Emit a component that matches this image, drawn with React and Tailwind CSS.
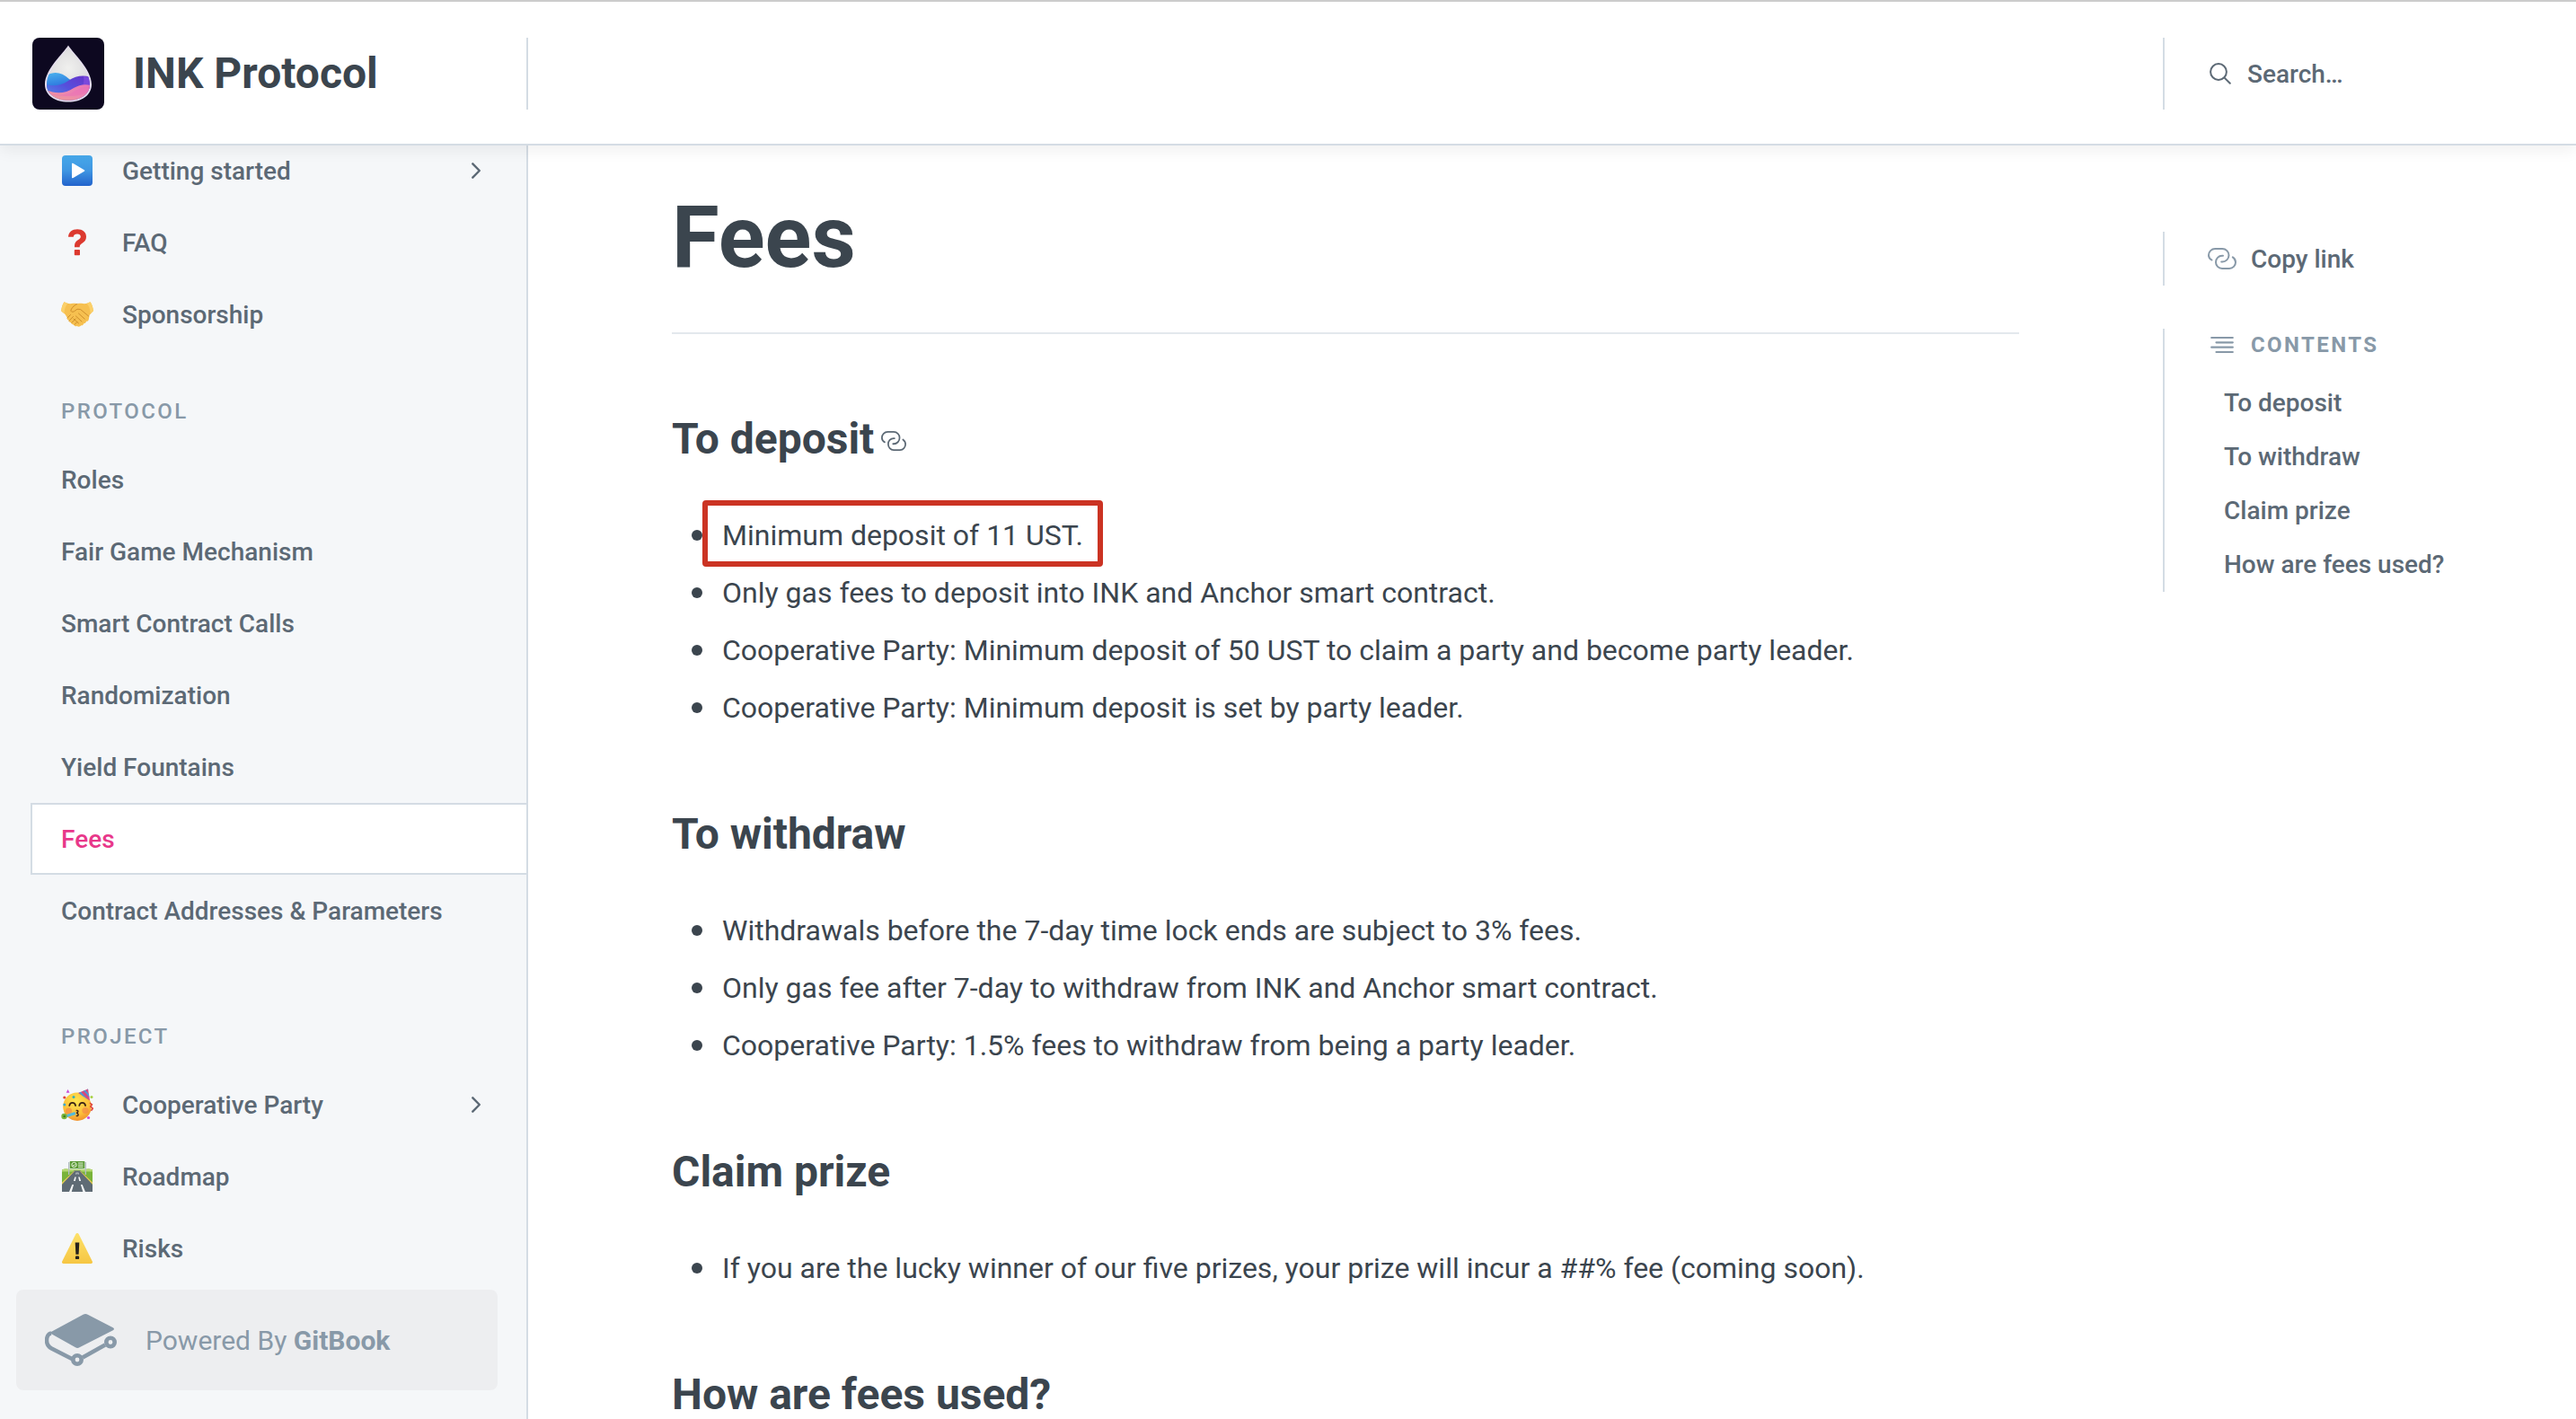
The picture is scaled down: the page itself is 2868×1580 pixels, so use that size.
const sidebarTop = [
  { label: "Getting started", Icon: PlayEmoji, expandable: true },
  { label: "FAQ", Icon: QuestionEmoji },
  { label: "Sponsorship", Icon: HandshakeEmoji },
];

const protocolPages = [
  { label: "Roles" },
  { label: "Fair Game Mechanism" },
  { label: "Smart Contract Calls" },
  { label: "Randomization" },
  { label: "Yield Fountains" },
  { label: "Fees", active: true },
  { label: "Contract Addresses & Parameters" },
];

const projectPages = [
  { label: "Cooperative Party", Icon: PartyEmoji, expandable: true },
  { label: "Roadmap", Icon: RoadEmoji },
  { label: "Risks", Icon: WarningEmoji },
];

const sections = [
  {
    id: "to-deposit",
    title: "To deposit",
    linked: true,
    items: [
      { text: "Minimum deposit of 11 UST.", highlighted: true },
      { text: "Only gas fees to deposit into INK and Anchor smart contract." },
      { text: "Cooperative Party: Minimum deposit of 50 UST to claim a party and become party leader." },
      { text: "Cooperative Party: Minimum deposit is set by party leader." },
    ],
  },
  {
    id: "to-withdraw",
    title: "To withdraw",
    items: [
      { text: "Withdrawals before the 7-day time lock ends are subject to 3% fees." },
      { text: "Only gas fee after 7-day to withdraw from INK and Anchor smart contract." },
      { text: "Cooperative Party: 1.5% fees to withdraw from being a party leader." },
    ],
  },
  {
    id: "claim-prize",
    title: "Claim prize",
    items: [
      { text: "If you are the lucky winner of our five prizes, your prize will incur a ##% fee (coming soon)." },
    ],
  },
  { id: "how-are-fees-used", title: "How are fees used?", items: [] },
];

function PlayEmoji() {
  return (
    <svg viewBox="0 0 36 36" className="size-9 shrink-0" aria-hidden="true">
      <defs>
        <linearGradient id="play" x1="0" y1="0" x2="0" y2="1">
          <stop offset="0" stopColor="#47a9ea" />
          <stop offset="0.5" stopColor="#3f96e2" />
          <stop offset="1" stopColor="#2263cc" />
        </linearGradient>
      </defs>
      <rect x="1" y="1" width="34" height="34" rx="4" fill="url(#play)" />
      <path d="M12 10.500v15a.8.8 0 0 0 1.200.7l12.600-7.400a.9.9 0 0 0 0-1.600L13.200 9.800a.8.8 0 0 0-1.200.7z" fill="#fff" />
    </svg>
  );
}

function QuestionEmoji() {
  return (
    <svg viewBox="0 0 36 36" className="size-9 shrink-0" aria-hidden="true">
      <path
        d="M8 11.700C8.300 6.500 12.300 3.200 18.100 3.200c5.800 0 9.900 3.200 9.900 8.200 0 3.600-1.800 5.700-4.700 7.500-2.200 1.400-2.600 2.200-2.600 4.300h-5.700v-1.500c0-3.300 1.500-5.100 4.100-6.700 2-1.200 2.700-2.100 2.700-3.500 0-1.800-1.500-3-3.800-3s-4 1.200-4.200 3.200z"
        fill="#dc3a30"
      />
      <rect x="14.800" y="26" width="6.200" height="6.200" rx="0.800" fill="#dc3a30" />
    </svg>
  );
}

function HandshakeEmoji() {
  return (
    <svg viewBox="0 0 36 36" className="size-9 shrink-0" aria-hidden="true">
      <path
        d="M3.500 4.200c2.500 1.500 5 2.100 8 1.900 2.500-.2 4.300-.6 6.500.3 2.300-.9 4.200-.5 6.500-.3 3 .2 5.500-.4 8-1.900 1.800 2.400 3.200 6.500 3.400 10-1.300 1.600-3 3-4.200 4.500l-1 5.200c-.5 1.500-1.500 2-2.700 1.900-.2 1.600-1.200 2.600-2.800 2.500-.3 1.500-1.500 2.400-3 2-1 1.700-3 1.800-4.600.7-1.500.6-3-.1-3.400-1.600-1.500.2-2.700-.6-2.900-2.100-1.600.1-2.600-1-2.600-2.500-1.500-.3-2.300-1.600-1.900-3L4.500 18C3.300 16.700 1.200 15.700.2 14.200c.2-3.500 1.500-7.600 3.300-10z"
        fill="#f6c050"
      />
      <path d="M3.500 4.200C1.700 6.600.4 10.700.2 14.200l3.300 2.600C3.700 12 5 8.500 7.500 5.800zM32.500 4.200c1.800 2.400 3.200 6.500 3.400 10l-3.300 2.600c-.2-4.800-1.500-8.300-4-11z" fill="#fbd06a" />
      <g fill="none" stroke="#cf8f2c" strokeWidth="1" strokeLinecap="round" strokeLinejoin="round">
        <path d="M18 6.400c-3 1.200-5.500 3.600-7 6.600-.7 2 1.600 2.900 3.400 1.800l3.600-2.600 3.600.3 9 7.500" />
        <path d="M19.500 17l6.800 6.200M16.500 20l6.500 6M14 23l5.500 5" />
        <path d="M7 22l3.500-3.500M9 25.200l4.500-4.700M11.800 27.400l4.500-4.500M15 29.500l3-3.200" />
      </g>
    </svg>
  );
}

function PartyEmoji() {
  return (
    <svg viewBox="0 0 36 36" className="size-9 shrink-0" aria-hidden="true">
      <defs>
        <radialGradient id="face" cx="0.450" cy="0.300" r="0.800">
          <stop offset="0" stopColor="#fee550" />
          <stop offset="0.600" stopColor="#fbbf3a" />
          <stop offset="1" stopColor="#ee7f2a" />
        </radialGradient>
        <clipPath id="hat">
          <path d="M30 0.500l2 13-13-8.500z" />
        </clipPath>
      </defs>
      <circle cx="18" cy="20.200" r="15.800" fill="url(#face)" />
      <circle cx="8.500" cy="25" r="3.600" fill="#f2824a" opacity="0.600" />
      <circle cx="27" cy="24.500" r="3.600" fill="#f2824a" opacity="0.600" />
      <path d="M9.300 19c.6-4.300 6-4.300 6.800 0M20.300 19c.6-4.300 6-4.300 6.800 0" fill="none" stroke="#3b2416" strokeWidth="1.800" strokeLinecap="round" />
      <path d="M17.300 24.500c2-.6 2.400 2.400-.4 2.800 2.800.2 3 3.600.4 3.300" fill="none" stroke="#4a2a18" strokeWidth="1.500" strokeLinecap="round" />
      <path d="M15.300 26l1 3L5 32.500l-1-2.800z" fill="#53b9dc" />
      <circle cx="3.500" cy="31" r="3.200" fill="#7db53c" />
      <circle cx="3.700" cy="31" r="1.300" fill="#3f7a24" />
      <path d="M30 0.500l2 13-13-8.500z" fill="#d8477e" />
      <g clipPath="url(#hat)" stroke="#4d9bd6" strokeWidth="2">
        <path d="M19 2l14 15M23-1l12 13M27-3l9 10" />
      </g>
      <path d="M32 16l2.400 2-1.600 2.200 2.600 2-2 2.600" fill="none" stroke="#e0453c" strokeWidth="1.600" />
      <path d="M7.500 1l2 3.800H5.700z" fill="#c94bd6" />
      <circle cx="3.800" cy="10" r="1.600" fill="#e0453c" />
      <circle cx="3.800" cy="18" r="1.500" fill="#35a8d8" />
      <circle cx="14" cy="9.500" r="1.500" fill="#35b0b8" />
      <circle cx="34" cy="9.500" r="1.500" fill="#a8d244" />
      <circle cx="30.500" cy="32.500" r="1.600" fill="#d04bd8" />
    </svg>
  );
}

function RoadEmoji() {
  return (
    <svg viewBox="0 0 36 36" className="size-9 shrink-0" aria-hidden="true">
      <path d="M1 10.500c3-1.800 6-1 9-.5h16c3-.8 6-1 9 .5V35H1z" fill="#79b33a" />
      <path d="M1 10.500c3-1.800 6-1 9-.5h16c3-.8 6-1 9 .5v2H1z" fill="#b5d873" />
      <path d="M14.500 11.500h7L35 27v8H1v-8z" fill="#5f6b75" />
      <path d="M14.300 12L1 24.500v2.200L15 12zM21.700 12L35 24.500v2.200L21 12z" fill="#e7c75a" />
      <path d="M12.300 27l1.800 0-2.400 8H9zM23.700 27l-1.800 0 2.400 8H27zM15.300 18.500h1.500l-1 4.500h-1.900zM20.700 18.500h-1.500l1 4.500h1.900zM16.800 13.500h.8l-.3 2h-1zM19.200 13.500h-.8l.3 2h1z" fill="#f4f6f7" />
      <path d="M8 2h1.300v14H8zM26.700 2H28v14h-1.300z" fill="#b4bec6" />
      <rect x="9.800" y="1" width="16.500" height="8.200" fill="#5a9a34" />
      <circle cx="14.500" cy="5" r="2.700" fill="none" stroke="#e9f3e0" strokeWidth="1" />
      <path d="M13 5l1.200 1.200 1.800-2M19 3h5.500M19 5.200h5.500M19 7.300h5.500" fill="none" stroke="#e9f3e0" strokeWidth="1" />
    </svg>
  );
}

function WarningEmoji() {
  return (
    <svg viewBox="0 0 36 36" className="size-9 shrink-0" aria-hidden="true">
      <defs>
        <linearGradient id="warning" x1="0" y1="0" x2="0" y2="1">
          <stop offset="0" stopColor="#fde16a" />
          <stop offset="1" stopColor="#f6c643" />
        </linearGradient>
      </defs>
      <path d="M16.400 2.100a1.800 1.800 0 0 1 3.200 0L34.800 32.500A1.700 1.700 0 0 1 33.300 35H2.700a1.700 1.700 0 0 1-1.500-2.500z" fill="url(#warning)" />
      <path d="M15.700 11.500h4.600l-.7 13.200h-3.200z" fill="#27221c" />
      <rect x="15.900" y="26.500" width="4.200" height="3.600" rx="1.200" fill="#27221c" />
    </svg>
  );
}

function LogoMark() {
  return (
    <svg viewBox="0 0 80 80" className="size-20 shrink-0 rounded-lg" aria-hidden="true">
      <defs>
        <clipPath id="drop">
          <path d="M40 12.500C36 19 16 37 16 54 16 65.500 27 71.800 40 71.800S64 65.500 64 54C64 37 44 19 40 12.500z" />
        </clipPath>
        <linearGradient id="blue" x1="0" y1="0" x2="0.300" y2="1">
          <stop offset="0" stopColor="#4db5ee" />
          <stop offset="1" stopColor="#1f5fd8" />
        </linearGradient>
        <linearGradient id="violet" x1="1" y1="0" x2="0" y2="1">
          <stop offset="0" stopColor="#6b2fc9" />
          <stop offset="0.450" stopColor="#5550dc" />
          <stop offset="1" stopColor="#4ba3f2" />
        </linearGradient>
        <linearGradient id="pink" x1="1" y1="0" x2="0.400" y2="1">
          <stop offset="0" stopColor="#e874b8" />
          <stop offset="0.500" stopColor="#ec86b0" />
          <stop offset="1" stopColor="#eda090" />
        </linearGradient>
        <radialGradient id="glass" cx="0.500" cy="0.450" r="0.500">
          <stop offset="0" stopColor="#f0f0ee" />
          <stop offset="1" stopColor="#cfcdd2" />
        </radialGradient>
      </defs>
      <rect width="80" height="80" fill="#0d0820" />
      <path d="M40 8.500C35 17 14 35 14 52 14 64 25 71.500 40 71.500S66 64 66 52C66 35 45 17 40 8.500z" fill="#e6def0" />
      <g transform="translate(0 -2)">
        <g clipPath="url(#drop)">
          <rect width="80" height="80" fill="url(#glass)" />
          <path d="M15 44c9-5 18-4 26 4l10 6-20 10H12z" fill="url(#blue)" />
          <path d="M12 53c8 3 18 4 28-3 9-6 18-7 28-3v30H12z" fill="url(#violet)" />
          <path d="M57 45l10 1v14H53c4-4 5-10 4-15z" fill="#7a49dc" />
          <path d="M12 58c11 7 24 7 34 0 7-4 14-5 22-2v22H12z" fill="url(#pink)" />
          <path d="M14 62c11 5 22 5 32 0s14-6 22-6c-6 9-16 11-28 11-11 0-19-1-26-5z" fill="#ea68b8" opacity="0.400" />
        </g>
      </g>
    </svg>
  );
}

function GitBookMark() {
  return (
    <svg viewBox="0 0 80 58" className="h-[58px] w-20 shrink-0" fill="none" aria-hidden="true">
      <path d="M42.500.8c1.800-1 3.500-1 5.200 0L75.800 15.200c1.600.9 1.600 2.100 0 3L38.500 37.300c-1.500.8-3 .8-4.500 0L5 21z" fill="#8899a8" />
      <path d="M7 21.500C3.500 22 2 26 2 29.500c0 4 2 7 5.500 9L31 50.500M42 48.500L67 34.500" stroke="#8899a8" strokeWidth="4.500" />
      <circle cx="36" cy="51" r="4.700" stroke="#8899a8" strokeWidth="4.600" />
      <circle cx="73" cy="31.500" r="4.700" stroke="#8899a8" strokeWidth="4.600" />
    </svg>
  );
}

function LinkIcon({ className }) {
  return (
    <svg viewBox="0 0 32 24" preserveAspectRatio="none" className={className} fill="none" stroke="currentColor" strokeWidth="2" strokeLinecap="round" aria-hidden="true">
      <path d="M4.500 13.500C2.500 12.300 1 10.500 1 8.200 1 4.200 4.200 1 8.200 1h8C20.200 1 23.500 4.200 23.500 8.200s-3.300 7.300-7.300 7.300h-1" />
      <path d="M17 8.800h-1c-4 0-7 3.200-7 7.100S12 23 16 23h8c4 0 7-3.200 7-7.100 0-2.400-1.200-4.300-3.200-5.600" />
    </svg>
  );
}

function Chevron() {
  return (
    <svg viewBox="0 0 10 18" className="h-[18px] w-2.5 shrink-0" fill="none" stroke="currentColor" strokeWidth="2.400" strokeLinecap="round" strokeLinejoin="round" aria-hidden="true">
      <path d="M1.300 1.300L8.800 9l-7.500 7.700" />
    </svg>
  );
}

function SearchIcon() {
  return (
    <svg viewBox="0 0 24 24" className="size-6 shrink-0" fill="none" stroke="currentColor" strokeWidth="2" strokeLinecap="round" aria-hidden="true">
      <circle cx="10" cy="10" r="8.900" />
      <path d="M16.600 16.600L22.800 22.800" />
    </svg>
  );
}

function ContentsIcon() {
  return (
    <svg viewBox="0 0 26 20" className="h-5 w-[26px] shrink-0" fill="none" stroke="currentColor" strokeWidth="2.200" strokeLinecap="round" aria-hidden="true">
      <path d="M1.200 2h23.600M6.500 7.300h18.300M1.200 12.700h23.600M6.500 18h18.300" />
    </svg>
  );
}

function NavItem({ item }) {
  const { label, Icon, expandable, active } = item;
  return (
    <li>
      <a
        href="#"
        aria-current={active ? "page" : undefined}
        className={
          active
            ? "flex h-20 items-center border-2 border-r-0 border-[#d4dce4] bg-white pl-8 text-[#e8388a]"
            : "flex h-20 items-center gap-8 pr-[51px] pl-[34px]"
        }
      >
        {Icon && <Icon />}
        <span className="flex-1 pt-0.5">{label}</span>
        {expandable && <Chevron />}
      </a>
    </li>
  );
}

function NavGroup({ title, items }) {
  return (
    <section>
      {title && (
        <h2 className="pl-[34px] text-[24px] leading-8 font-medium tracking-[2.400px] text-[#8899a8] uppercase">{title}</h2>
      )}
      <ul className={title ? "pt-5" : ""}>
        {items.map((item) => (
          <NavItem key={item.label} item={item} />
        ))}
      </ul>
    </section>
  );
}

export default function App() {
  return (
    <div className="flex h-screen flex-col overflow-hidden bg-white font-[Roboto,sans-serif] text-[#3b454e]">
      <header className="relative z-10 flex shrink-0 items-center border-t-2 border-b-2 border-t-[#cccccc] border-b-[#d4dce4] bg-white pt-10 pb-[38px] shadow-[0_6px_16px_rgba(0,0,0,0.06)]">
        <a href="#" className="flex w-[588px] shrink-0 items-center gap-8 border-r-2 border-[#d4dce4] pl-9">
          <LogoMark />
          <span className="text-5xl font-bold">INK Protocol</span>
        </a>
        <div className="flex-1" />
        <label className="flex h-20 w-[460px] shrink-0 items-center gap-[18px] border-l-2 border-[#d4dce4] pl-[50px] text-[#5c6975]">
          <SearchIcon />
          <input
            type="search"
            aria-label="Search"
            placeholder="Search…"
            className="w-full min-w-0 bg-transparent pt-0.5 text-[28px] font-medium outline-none placeholder:text-[#5c6975] placeholder:opacity-100"
          />
        </label>
      </header>

      <div className="flex min-h-0 flex-1">
        <aside className="flex w-[588px] shrink-0 flex-col border-r-2 border-[#d4dce4] bg-[#f5f7f9]">
          <nav className="-mt-3 flex-1 pl-[34px] text-[28px] font-medium text-[#5c6975]">
            <NavGroup items={sidebarTop} />
            <div className="pt-13">
              <NavGroup title="Protocol" items={protocolPages} />
            </div>
            <div className="pt-[84px]">
              <NavGroup title="Project" items={projectPages} />
            </div>
          </nav>
          <a href="#" className="mr-8 mb-8 ml-[18px] flex h-28 items-center gap-8 rounded-lg bg-[#edeef0] pl-8 text-[30px] text-[#8899a8]">
            <GitBookMark />
            <span>
              Powered By <b className="font-bold">GitBook</b>
            </span>
          </a>
        </aside>

        <main className="min-w-0 flex-1 overflow-hidden px-40 pt-[42px]">
          <h1 className="border-b-2 border-[#e3e8ed] pb-[46px] text-8xl leading-[120px] font-bold">Fees</h1>
          <div className="flex flex-col gap-[72px] pt-20">
            {sections.map((section) => (
              <section key={section.id} id={section.id} className="flex flex-col gap-[38px]">
                <h2 className="flex items-center gap-2 text-5xl leading-[74px] font-bold">
                  {section.title}
                  {section.linked && (
                    <a href="#to-deposit" aria-label="Link to this section" className="text-[#5c6975]">
                      <LinkIcon className="mt-1 h-[22px] w-7" />
                    </a>
                  )}
                </h2>
                {section.items.length > 0 && (
                  <ul className="pl-[22px] text-[32px] leading-[64px]">
                    {section.items.map((item) => (
                      <li
                        key={item.text}
                        className="flex items-center gap-[22px] before:size-3 before:shrink-0 before:rounded-full before:bg-[#3b454e]"
                      >
                        {item.highlighted ? (
                          <span className="relative">
                            {item.text}
                            <span className="absolute -inset-x-[22px] -top-[7px] -bottom-[3px] rounded border-6 border-[#cb3323]" />
                          </span>
                        ) : (
                          <span>{item.text}</span>
                        )}
                      </li>
                    ))}
                  </ul>
                )}
              </section>
            ))}
          </div>
        </main>

        <aside className="flex w-[460px] shrink-0 flex-col gap-12 pt-24 text-[28px] font-medium text-[#5c6975]">
          <div className="flex h-15 items-center border-l-2 border-[#d4dce4] pl-12">
            <button type="button" className="flex items-center gap-4">
              <LinkIcon className="h-6 w-8 text-[#8899a8]" />
              <span className="pt-0.5">Copy link</span>
            </button>
          </div>
          <nav className="border-l-2 border-[#d4dce4]">
            <h2 className="flex items-center gap-[19px] pl-[51px] text-[24px] leading-9 font-bold tracking-[2.400px] text-[#8899a8] uppercase">
              <ContentsIcon />
              Contents
            </h2>
            <ul className="pt-[17px] pl-[66px] leading-[60px]">
              {sections.map((section) => (
                <li key={section.id}>
                  <a href={"#" + section.id}>{section.title}</a>
                </li>
              ))}
            </ul>
          </nav>
        </aside>
      </div>
    </div>
  );
}
